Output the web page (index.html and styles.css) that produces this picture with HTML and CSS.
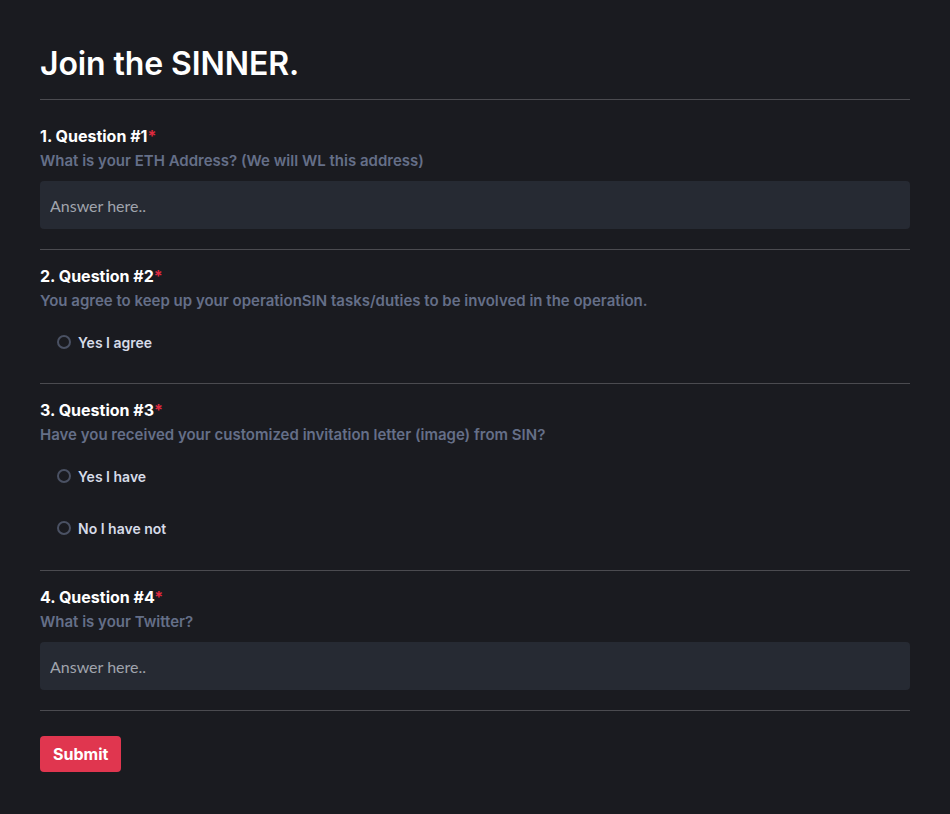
FILE: index.html
```html
<!DOCTYPE html>
<html>
<head>
<meta charset="utf-8">
<link rel="stylesheet" href="styles.css">
</head>
<body>
<main class="page">
  <h1 class="title">Join the SINNER.</h1>
  <hr class="divider">

  <section class="question question-first">
    <div class="q-label">1. Question #1<span class="req">*</span></div>
    <div class="q-desc">What is your ETH Address? (We will WL this address)</div>
    <input class="answer" type="text" placeholder="Answer here..">
  </section>
  <hr class="divider">

  <section class="question question-radio">
    <div class="q-label">2. Question #2<span class="req">*</span></div>
    <div class="q-desc">You agree to keep up your operationSIN tasks/duties to be involved in the operation.</div>
    <div class="options">
      <label class="option"><span class="radio"></span>Yes I agree</label>
    </div>
  </section>
  <hr class="divider">

  <section class="question question-radio question-multi">
    <div class="q-label">3. Question #3<span class="req">*</span></div>
    <div class="q-desc">Have you received your customized invitation letter (image) from SIN?</div>
    <div class="options">
      <label class="option"><span class="radio"></span>Yes I have</label>
      <label class="option"><span class="radio"></span>No I have not</label>
    </div>
  </section>
  <hr class="divider">

  <section class="question">
    <div class="q-label">4. Question #4<span class="req">*</span></div>
    <div class="q-desc">What is your Twitter?</div>
    <input class="answer" type="text" placeholder="Answer here..">
  </section>
  <hr class="divider">

  <div class="actions">
    <button class="submit" type="button">Submit</button>
  </div>
</main>
</body>
</html>
```

FILE: styles.css
```css
html, body {
  margin: 0;
  padding: 0;
  background: #1a1b20;
}
body {
  font-family: Inter, "Noto Sans", sans-serif;
  color: #ffffff;
}
.page {
  padding: 44px 40px 40px 40px;
}
.title {
  margin: 0 0 15px 0;
  font-size: 32px;
  line-height: 40px;
  font-weight: 600;
  letter-spacing: -0.1px;
}
.divider {
  margin: 0;
  border: 0;
  height: 1px;
  background: #4b4b50;
}
.question {
  padding: 16px 0 20px 0;
}
.question-first {
  padding-top: 26px;
}
.question-radio {
  padding-bottom: 15px;
}
.question-multi {
  padding-bottom: 16px;
}
.q-label {
  font-size: 16px;
  line-height: 20px;
  font-weight: 700;
  margin-bottom: 5px;
}
.req {
  color: #e02a3f;
  font-weight: 700;
}
.q-desc {
  font-size: 15px;
  line-height: 20px;
  font-weight: 600;
  color: #656f88;
}
.answer {
  display: block;
  box-sizing: border-box;
  width: 100%;
  height: 48px;
  margin-top: 10px;
  padding: 0 10px;
  border: 0;
  border-radius: 4px;
  background: #262a33;
  font-family: Lato, "Noto Sans", sans-serif;
  font-size: 16px;
  color: #e0e0e0;
  outline: none;
}
.answer::placeholder {
  color: #a0a4ad;
}
.options {
  margin-top: 5px;
  display: flex;
  flex-direction: column;
}
.option {
  display: flex;
  align-items: center;
  height: 52px;
  padding-left: 17px;
  font-size: 14px;
  font-weight: 600;
  color: #d6dbe8;
}
.radio {
  box-sizing: border-box;
  width: 14px;
  height: 14px;
  border: 2px solid #4a5163;
  border-radius: 50%;
  margin-right: 7px;
}
.actions {
  padding-top: 25px;
}
.submit {
  height: 36px;
  padding: 0 13px;
  border: 0;
  border-radius: 4px;
  background: #e0364f;
  color: #ffffff;
  font-family: Inter, "Noto Sans", sans-serif;
  font-size: 16px;
  font-weight: 700;
}
```
